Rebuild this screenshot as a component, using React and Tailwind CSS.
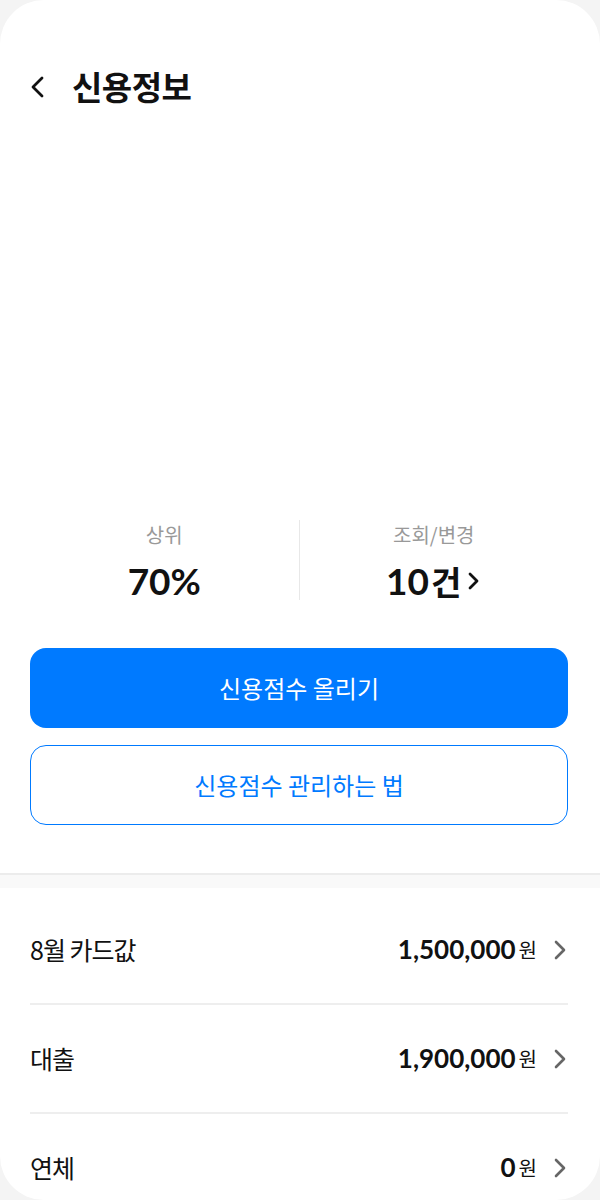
import React from "react";

const KR = { fontFamily: '"Noto Sans CJK KR", "Noto Sans", sans-serif' };
const NUM = { fontFamily: 'Lato, "Noto Sans CJK KR", sans-serif' };

function Chevron({ className = "" }) {
  return (
    <svg width="14" height="22" viewBox="0 0 14 22" className={className} fill="none">
      <path d="M3 3l8 8-8 8" stroke="currentColor" strokeWidth="2.6" strokeLinecap="round" strokeLinejoin="round" />
    </svg>
  );
}

function Row({ label, amount }) {
  return (
    <div className="flex items-center justify-between h-[107px]">
      <span className="text-[25px] text-[#111] tracking-[-1px]" style={KR}>{label}</span>
      <div className="flex items-center">
        <span className="text-[26px] font-bold text-[#111]" style={NUM}>{amount}</span>
        <span className="text-[20px] text-[#111] ml-[3px]" style={KR}>원</span>
        <Chevron className="ml-[16px] mr-[1px] text-[#666]" />
      </div>
    </div>
  );
}

export default function App() {
  return (
    <div className="w-[600px] h-[1200px] bg-[#f4f4f4] overflow-hidden">
      <div className="w-[600px] h-[1200px] bg-white rounded-[44px] overflow-hidden" style={KR}>
        <div className="flex items-center h-[60px] pt-0 mt-[57px] px-[28px]">
          <svg width="20" height="28" viewBox="0 0 20 28" fill="none">
            <path d="M14 5L5 14l9 9" stroke="#111" strokeWidth="2.8" strokeLinecap="round" strokeLinejoin="round" />
          </svg>
          <h1 className="ml-[24px] text-[33px] font-bold text-[#111] tracking-[-0.5px]">신용정보</h1>
        </div>

        <div className="h-[403px]" />

        <div className="pl-[30px] pr-[32px] flex">
          <div className="flex-1 flex flex-col items-center">
            <span className="text-[20px] text-[#999] leading-[30px]">상위</span>
            <span className="text-[37px] font-bold text-[#111] leading-[50px] mt-[6px]" style={NUM}>70%</span>
          </div>
          <div className="w-[1px] h-[80px] bg-[#e8e8e8]" />
          <div className="flex-1 flex flex-col items-center">
            <span className="text-[20px] text-[#999] leading-[30px]">조회/변경</span>
            <div className="flex items-center mt-[6px]">
              <span className="text-[37px] font-bold text-[#111] leading-[50px]" style={NUM}>10</span>
              <span className="text-[33px] font-bold text-[#111] leading-[50px] ml-[2px]">건</span>
              <svg width="14" height="22" viewBox="0 0 14 22" fill="none" className="ml-[6px]">
                <path d="M3 4l7 7-7 7" stroke="#111" strokeWidth="2.8" strokeLinecap="round" strokeLinejoin="round" />
              </svg>
            </div>
          </div>
        </div>

        <div className="pl-[30px] pr-[32px] mt-[42px] flex flex-col gap-[17px]">
          <button className="h-[80px] rounded-[16px] bg-[#007aff] text-white text-[24px] font-normal">신용점수 올리기</button>
          <button className="h-[80px] rounded-[16px] border-[1.5px] border-[#007aff] text-[#007aff] text-[24px] font-normal bg-white">신용점수 관리하는 법</button>
        </div>

        <div className="mt-[48px] h-[2px] bg-[#ececec]" />
        <div className="h-[13px] bg-[#f9f9f9]" />

        <div className="pl-[30px] pr-[32px] mt-[8px] flex flex-col">
          <Row label="8월 카드값" amount="1,500,000" />
          <div className="h-[2px] bg-[#eeeeee]" />
          <Row label="대출" amount="1,900,000" />
          <div className="h-[2px] bg-[#eeeeee]" />
          <Row label="연체" amount="0" />
        </div>
      </div>
    </div>
  );
}
